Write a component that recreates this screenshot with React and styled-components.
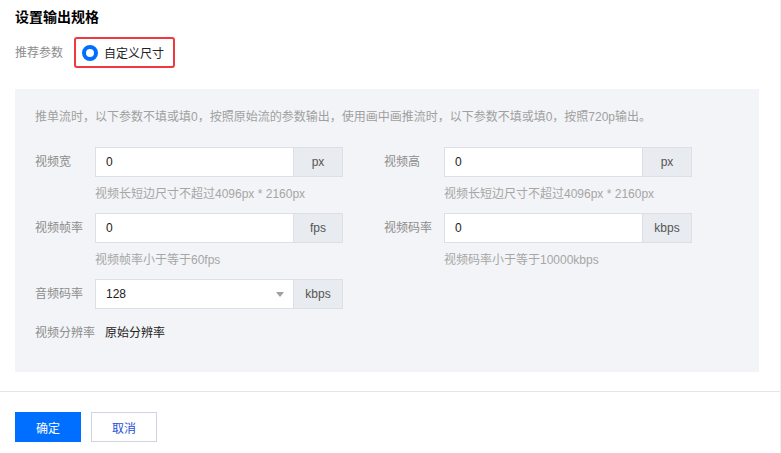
import React from "react"
import styled, { createGlobalStyle } from "styled-components"

const GlobalStyle = createGlobalStyle`
  body {
    margin: 0;
    background: #fff;
    font-family: "Liberation Sans", "Noto Sans CJK SC", sans-serif;
    font-size: 12px;
    color: #000;
  }
`

const Page = styled.div`
  width: 781px;
  height: 453px;
  box-sizing: border-box;
  padding-top: 10px;
  border-right: 1px solid #f0f0f0;
`

const Body = styled.div`
  padding: 0 21px 0 15px;
`

const Title = styled.h3`
  margin: 0;
  font-size: 14px;
  line-height: 14px;
  font-weight: bold;
  color: #000;
`

const PresetRow = styled.div`
  display: flex;
  align-items: center;
  margin-top: 13px;
`

const PresetLabel = styled.span`
  width: 59px;
  color: #8c8c8c;
  line-height: 16px;
`

const Highlight = styled.label`
  display: flex;
  align-items: center;
  gap: 6px;
  height: 27px;
  padding: 0 9px 0 6px;
  border: 2px solid #f0393e;
  border-radius: 3px;
  color: #222;
`

const RadioDot = styled.span`
  width: 16px;
  height: 16px;
  box-sizing: border-box;
  border-radius: 50%;
  border: 4.5px solid #006eff;
  background: #fff;
`

const Panel = styled.div`
  margin-top: 21px;
  background: #f3f4f7;
  height: 283px;
  box-sizing: border-box;
  padding: 20px 20px 0;
`

const Notice = styled.p`
  margin: 0 0 22px;
  line-height: 16px;
  color: #a0a0a0;
`

const Grid = styled.div`
  display: grid;
  grid-template-columns: 349px 1fr;
  row-gap: 11px;
`

const Field = styled.div``

const FieldLine = styled.div`
  display: flex;
  align-items: center;
`

const Label = styled.span`
  width: ${(p) => (p.$auto ? "auto" : "60px")};
  color: #8c8c8c;
  line-height: 16px;
`

const Value = styled.span`
  color: #222;
`

const InputBox = styled.div`
  width: 198px;
  height: 30px;
  box-sizing: border-box;
  background: #fff;
  border: 1px solid #dcdfe6;
  border-right: none;
  display: flex;
  align-items: center;
  justify-content: space-between;
  padding: 0 10px;
  color: #222;
`

const Suffix = styled.div`
  width: 50px;
  height: 30px;
  box-sizing: border-box;
  background: #e8ebf0;
  border: 1px solid #dcdfe6;
  display: flex;
  align-items: center;
  justify-content: center;
  color: #555;
`

const Caret = styled.span`
  width: 0;
  height: 0;
  border-left: 4px solid transparent;
  border-right: 4px solid transparent;
  border-top: 5px solid #a0a0a0;
  margin-right: -1px;
`

const Hint = styled.div`
  margin: 9px 0 0 60px;
  line-height: 16px;
  color: #a6a6a6;
`

const InfoRow = styled.div`
  display: flex;
  align-items: center;
  margin-top: 16px;
  line-height: 16px;
  gap: 10px;
`

const Divider = styled.div`
  margin-top: 19px;
  border-top: 1px solid #e5e5e5;
`

const Footer = styled.div`
  display: flex;
  gap: 10px;
  padding: 20px 15px 0;
`

const Button = styled.button`
  width: 66px;
  height: 30px;
  box-sizing: border-box;
  font-family: inherit;
  font-size: 12px;
  border: 1px solid ${(p) => (p.$primary ? "#006eff" : "#cfd5de")};
  background: ${(p) => (p.$primary ? "#006eff" : "#fff")};
  color: ${(p) => (p.$primary ? "#fff" : "#1f4fd8")};
  cursor: pointer;
`

const fields = [
  { label: "视频宽", value: "0", unit: "px", hint: "视频长短边尺寸不超过4096px * 2160px" },
  { label: "视频高", value: "0", unit: "px", hint: "视频长短边尺寸不超过4096px * 2160px" },
  { label: "视频帧率", value: "0", unit: "fps", hint: "视频帧率小于等于60fps" },
  { label: "视频码率", value: "0", unit: "kbps", hint: "视频码率小于等于10000kbps" },
  { label: "音频码率", value: "128", unit: "kbps", select: true },
]

export default function App() {
  return (
    <Page>
      <GlobalStyle />
      <Body>
        <Title>设置输出规格</Title>
        <PresetRow>
          <PresetLabel>推荐参数</PresetLabel>
          <Highlight>
            <RadioDot />
            自定义尺寸
          </Highlight>
        </PresetRow>
        <Panel>
          <Notice>
            推单流时，以下参数不填或填0，按照原始流的参数输出，使用画中画推流时，以下参数不填或填0，按照720p输出。
          </Notice>
          <Grid>
            {fields.map((f) => (
              <Field key={f.label}>
                <FieldLine>
                  <Label>{f.label}</Label>
                  <InputBox>
                    {f.value}
                    {f.select && <Caret />}
                  </InputBox>
                  <Suffix>{f.unit}</Suffix>
                </FieldLine>
                {f.hint && <Hint>{f.hint}</Hint>}
              </Field>
            ))}
          </Grid>
          <InfoRow>
            <Label $auto>视频分辨率</Label>
            <Value>原始分辨率</Value>
          </InfoRow>
        </Panel>
      </Body>
      <Divider />
      <Footer>
        <Button $primary>确定</Button>
        <Button>取消</Button>
      </Footer>
    </Page>
  )
}
